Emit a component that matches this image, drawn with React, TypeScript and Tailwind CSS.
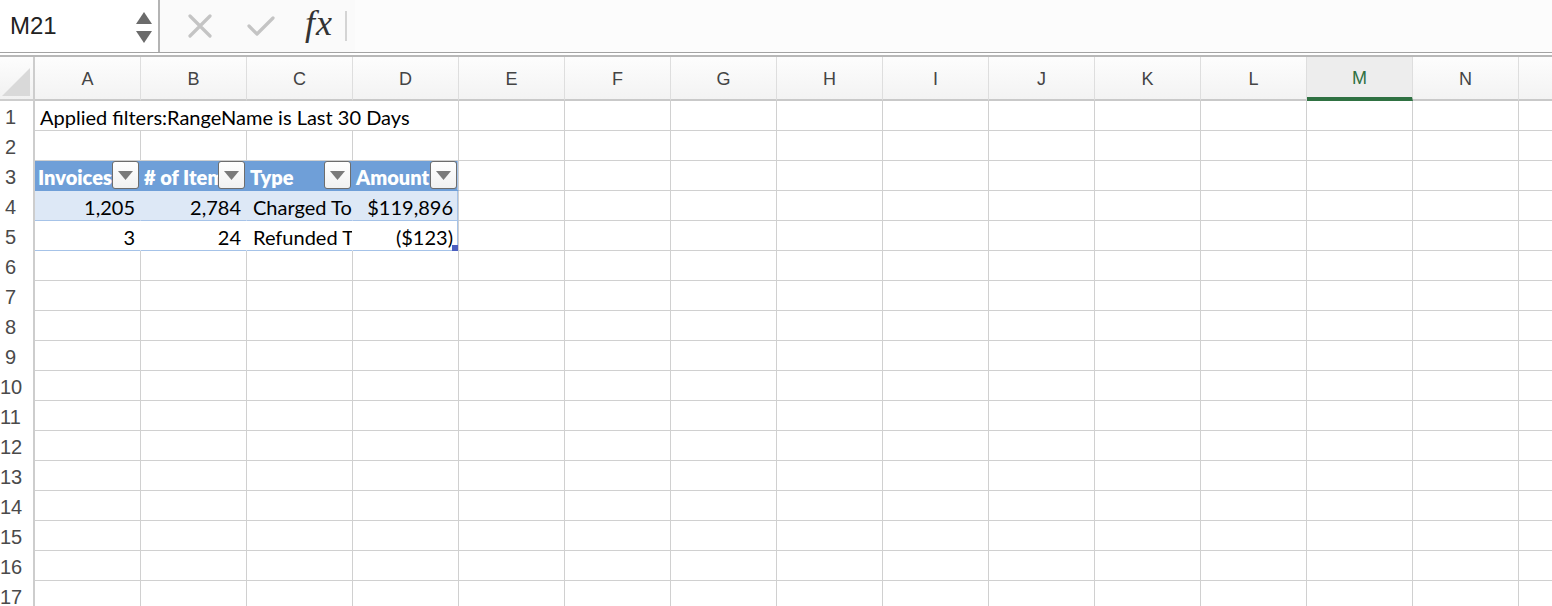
import React from 'react';

const COLS = ['A', 'B', 'C', 'D', 'E', 'F', 'G', 'H', 'I', 'J', 'K', 'L', 'M', 'N'];
const ROWS = Array.from({ length: 17 }, (_, i) => i + 1);

const cellFont = "font-['Lato',sans-serif] text-[20px] text-black";

function FilterButton() {
    return (
        <div className="absolute right-[1px] top-0 w-[27px] h-[28px] rounded-[3px] border border-[#6d6d6d] bg-gradient-to-b from-white to-[#f1f1f1] flex items-center justify-center">
            <svg width="15" height="9" viewBox="0 0 15 9">
                <path d="M0 0 H15 L7.5 9 Z" fill="#7a7a7a" />
            </svg>
        </div>
    );
}

function HeaderCell({ label, last }: { label: string; last?: boolean }) {
    return (
        <div
            className={
                'relative w-[106px] shrink-0 h-full bg-[#6f9fd8] border-b border-[#6f9fd8] overflow-hidden flex items-center pl-[3px] ' +
                (last ? 'border-r border-r-[#d0d0d0] shadow-[inset_-1px_0_0_#a6c3e8]' : 'border-r border-r-[#6f9fd8]')
            }
        >
            <span className="font-['Lato',sans-serif] font-extrabold text-[20px] text-white whitespace-nowrap pt-[3px]">{label}</span>
            <FilterButton />
        </div>
    );
}

function DataCell({
    text,
    align,
    stripe,
    last,
}: {
    text: string;
    align: 'left' | 'right';
    stripe?: boolean;
    last?: boolean;
}) {
    return (
        <div
            className={
                'relative w-[106px] shrink-0 h-full border-b border-b-[#a6c3e8] overflow-hidden flex items-center ' +
                (align === 'right' ? 'justify-end pr-[5px] ' : 'justify-start pl-[6px] ') +
                (stripe ? 'bg-[#dde8f6] ' : 'bg-white ') +
                (last
                    ? 'border-r border-r-[#d0d0d0] shadow-[inset_-1px_0_0_#a6c3e8]'
                    : stripe
                      ? 'border-r border-r-[#dde8f6]'
                      : 'border-r border-r-white')
            }
        >
            <span className={cellFont + ' whitespace-nowrap pt-[3px]'}>{text}</span>
        </div>
    );
}

function PlainCell() {
    return <div className="w-[106px] shrink-0 h-full border-r border-b border-[#d0d0d0]" />;
}

function renderRow(n: number) {
    if (n === 1) {
        return (
            <>
                <div className="relative w-[106px] shrink-0 h-full border-b border-[#d0d0d0] flex items-center pl-[5px]">
                    <span className={cellFont + ' whitespace-nowrap pt-[3px]'}>Applied filters:RangeName is Last 30 Days</span>
                </div>
                <div className="w-[212px] shrink-0 h-full border-b border-[#d0d0d0]" />
                <div className="w-[106px] shrink-0 h-full border-r border-b border-[#d0d0d0]" />
                {COLS.slice(4).map((c) => (
                    <PlainCell key={c} />
                ))}
            </>
        );
    }
    if (n === 3) {
        return (
            <>
                <HeaderCell label="Invoices" />
                <HeaderCell label="# of Items" />
                <HeaderCell label="Type" />
                <HeaderCell label="Amount" last />
                {COLS.slice(4).map((c) => (
                    <PlainCell key={c} />
                ))}
            </>
        );
    }
    if (n === 4 || n === 5) {
        const stripe = n === 4;
        const vals = n === 4 ? ['1,205', '2,784', 'Charged To', '$119,896'] : ['3', '24', 'Refunded T', '($123)'];
        return (
            <>
                <DataCell text={vals[0]} align="right" stripe={stripe} />
                <DataCell text={vals[1]} align="right" stripe={stripe} />
                <DataCell text={vals[2]} align="left" stripe={stripe} />
                <div className="relative">
                    <DataCell text={vals[3]} align="right" stripe={stripe} last />
                    {n === 5 && <div className="absolute right-[1px] bottom-0 w-[6px] h-[6px] bg-[#4b5fc0]" />}
                </div>
                {COLS.slice(4).map((c) => (
                    <PlainCell key={c} />
                ))}
            </>
        );
    }
    return COLS.map((c) => <PlainCell key={c} />);
}

export default function App() {
    return (
        <div className="w-[1552px] h-[606px] overflow-hidden bg-white">
            {/* Formula bar */}
            <div className="flex h-[53px] bg-[#fafafa] border-b border-[#a3a3a3]">
                <div className="w-[160px] shrink-0 bg-white border-r-2 border-[#b4b4b4] flex items-center justify-between pl-[10px] pr-[6px]">
                    <span className="font-['Liberation_Sans',sans-serif] text-[24px] text-[#222] pb-[1px]">M21</span>
                    <div className="flex flex-col gap-[7px] pt-[2px]">
                        <svg width="16" height="12" viewBox="0 0 16 12">
                            <path d="M8 0 L16 12 H0 Z" fill="#6b6b6b" />
                        </svg>
                        <svg width="16" height="12" viewBox="0 0 16 12">
                            <path d="M0 0 H16 L8 12 Z" fill="#6b6b6b" />
                        </svg>
                    </div>
                </div>
                <div className="flex items-center h-full pl-[28px]">
                    <svg width="24" height="24" viewBox="0 0 24 24">
                        <path d="M2 2 L22 22 M22 2 L2 22" stroke="#c4c4c4" strokeWidth="3.2" strokeLinecap="round" />
                    </svg>
                    <svg width="28" height="22" viewBox="0 0 28 22" className="ml-[35px]">
                        <path d="M2 11 L10 19 L26 3" stroke="#c4c4c4" strokeWidth="3.2" fill="none" strokeLinecap="round" strokeLinejoin="round" />
                    </svg>
                    <span className="ml-[30px] font-['Liberation_Serif',serif] italic text-[36px] tracking-[1px] text-[#333] leading-none pb-[6px]">fx</span>
                    <div className="ml-[12px] w-[2px] h-[30px] bg-[#d4d4d4]" />
                </div>
                <div className="flex-1 ml-[8px] bg-[#fcfcfc]" />
            </div>
            <div className="h-[2px] bg-white" />
            <div className="h-[2px] bg-[#b8b8b8]" />

            {/* Column headers */}
            <div className="flex h-[44px]">
                <div className="w-[35px] shrink-0 bg-gradient-to-b from-[#fdfdfd] to-[#f1f1f1] border-r-2 border-b-2 border-[#cdcdcd] flex items-end">
                    <svg width="33" height="33" viewBox="0 0 33 33">
                        <path d="M2 30 L30 30 L30 2 Z" fill="#d9d9d9" />
                    </svg>
                </div>
                {COLS.map((c) => (
                    <div
                        key={c}
                        className={
                            'w-[106px] shrink-0 border-r border-[#dedede] flex items-center justify-center font-[\'Liberation_Sans\',sans-serif] text-[18px] pt-[2px] ' +
                            (c === 'M'
                                ? 'bg-[#ededed] border-b-[4px] border-b-[#2f7142] text-[#2f7142]'
                                : 'bg-gradient-to-b from-[#fdfdfd] to-[#f3f3f3] border-b-2 border-b-[#c9c9c9] text-[#444]')
                        }
                    >
                        {c}
                    </div>
                ))}
                <div className="flex-1 bg-gradient-to-b from-[#fdfdfd] to-[#f3f3f3] border-b-2 border-[#c9c9c9]" />
            </div>

            {/* Rows */}
            {ROWS.map((n) => (
                <div key={n} className="flex h-[30px]">
                    <div className="w-[35px] shrink-0 border-r-2 border-[#cdcdcd] bg-white flex items-center pt-[2px] font-['Liberation_Sans',sans-serif] text-[20px] text-[#4a4a4a]">
                        <span className="w-[21px] text-center">{n}</span>
                    </div>
                    {renderRow(n)}
                    <div className="flex-1 h-full border-b border-[#d0d0d0]" />
                </div>
            ))}
        </div>
    );
}
